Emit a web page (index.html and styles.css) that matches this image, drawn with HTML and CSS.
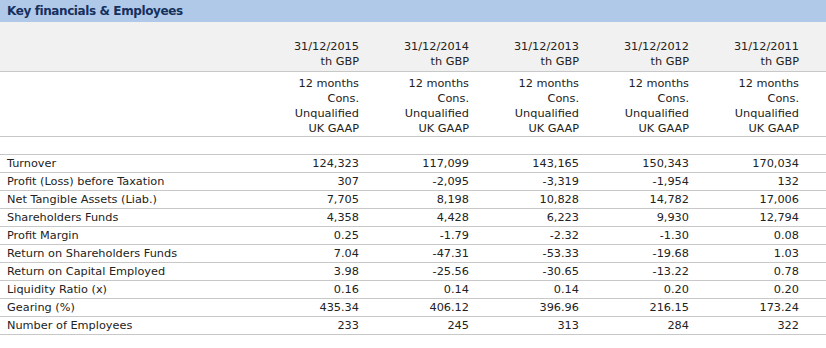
FILE: index.html
```html
<!doctype html>
<html lang="en">
<head>
<meta charset="utf-8">
<title>Key financials &amp; Employees</title>
<link rel="stylesheet" href="styles.css">
</head>
<body>
	<div class="kf-bloco">
		<div class="kf-titulo">Key financials &amp; Employees</div>
		<table class="kf-tabela">
			<colgroup>
				<col>
				<col class="kf-col-ano"><col class="kf-col-ano"><col class="kf-col-ano"><col class="kf-col-ano"><col class="kf-col-ano">
				<col class="kf-col-fim">
			</colgroup>
			<tr class="kf-datas">
				<td></td>
				<td>31/12/2015<br>th GBP</td>
				<td>31/12/2014<br>th GBP</td>
				<td>31/12/2013<br>th GBP</td>
				<td>31/12/2012<br>th GBP</td>
				<td>31/12/2011<br>th GBP</td>
				<td></td>
			</tr>
			<tr class="kf-info">
				<td></td>
				<td>12 months<br>Cons.<br>Unqualified<br>UK GAAP</td>
				<td>12 months<br>Cons.<br>Unqualified<br>UK GAAP</td>
				<td>12 months<br>Cons.<br>Unqualified<br>UK GAAP</td>
				<td>12 months<br>Cons.<br>Unqualified<br>UK GAAP</td>
				<td>12 months<br>Cons.<br>Unqualified<br>UK GAAP</td>
				<td></td>
			</tr>
			<tr class="kf-vazio"><td></td><td></td><td></td><td></td><td></td><td></td><td></td></tr>
			<tr><td>Turnover</td><td>124,323</td><td>117,099</td><td>143,165</td><td>150,343</td><td>170,034</td><td></td></tr>
			<tr><td>Profit (Loss) before Taxation</td><td>307</td><td>-2,095</td><td>-3,319</td><td>-1,954</td><td>132</td><td></td></tr>
			<tr><td>Net Tangible Assets (Liab.)</td><td>7,705</td><td>8,198</td><td>10,828</td><td>14,782</td><td>17,006</td><td></td></tr>
			<tr><td>Shareholders Funds</td><td>4,358</td><td>4,428</td><td>6,223</td><td>9,930</td><td>12,794</td><td></td></tr>
			<tr><td>Profit Margin</td><td>0.25</td><td>-1.79</td><td>-2.32</td><td>-1.30</td><td>0.08</td><td></td></tr>
			<tr><td>Return on Shareholders Funds</td><td>7.04</td><td>-47.31</td><td>-53.33</td><td>-19.68</td><td>1.03</td><td></td></tr>
			<tr><td>Return on Capital Employed</td><td>3.98</td><td>-25.56</td><td>-30.65</td><td>-13.22</td><td>0.78</td><td></td></tr>
			<tr><td>Liquidity Ratio (x)</td><td>0.16</td><td>0.14</td><td>0.14</td><td>0.20</td><td>0.20</td><td></td></tr>
			<tr><td>Gearing (%)</td><td>435.34</td><td>406.12</td><td>396.96</td><td>216.15</td><td>173.24</td><td></td></tr>
			<tr><td>Number of Employees</td><td>233</td><td>245</td><td>313</td><td>284</td><td>322</td><td></td></tr>
		</table>
	</div>
</body>
</html>
```

FILE: styles.css
```css
*
{
	margin: 0;
	padding: 0;
}
body
{
	font-family: "DejaVu Sans", Verdana, sans-serif;
	font-size: 11.3px;
	color: #222;
	background-color: #FFF;
}
.kf-titulo
{
	height: 22px;
	line-height: 22px;
	padding-left: 7px;
	background-color: #b1c9e8;
	color: #15305c;
	font-size: 12px;
	font-weight: bold;
	letter-spacing: -0.4px;
}
.kf-tabela
{
	width: 100%;
	border-collapse: collapse;
	table-layout: fixed;
}
.kf-col-ano
{
	width: 110px;
}
.kf-col-fim
{
	width: 27px;
}
.kf-tabela td
{
	height: 17px;
	line-height: 17px;
	padding: 0 0 0 7px;
	text-align: right;
	border-bottom: 1px solid #c8c8c8;
	white-space: nowrap;
}
.kf-tabela td:first-child
{
	text-align: left;
}
.kf-datas td
{
	background-color: #f1f1f1;
	line-height: 15px;
	padding-top: 17px;
	padding-bottom: 2px;
	height: 30px;
}
.kf-info td
{
	line-height: 15px;
	padding-top: 4px;
	padding-bottom: 0;
	height: 60px;
}
.kf-vazio td
{
	height: 17px;
	padding: 0;
}
```
